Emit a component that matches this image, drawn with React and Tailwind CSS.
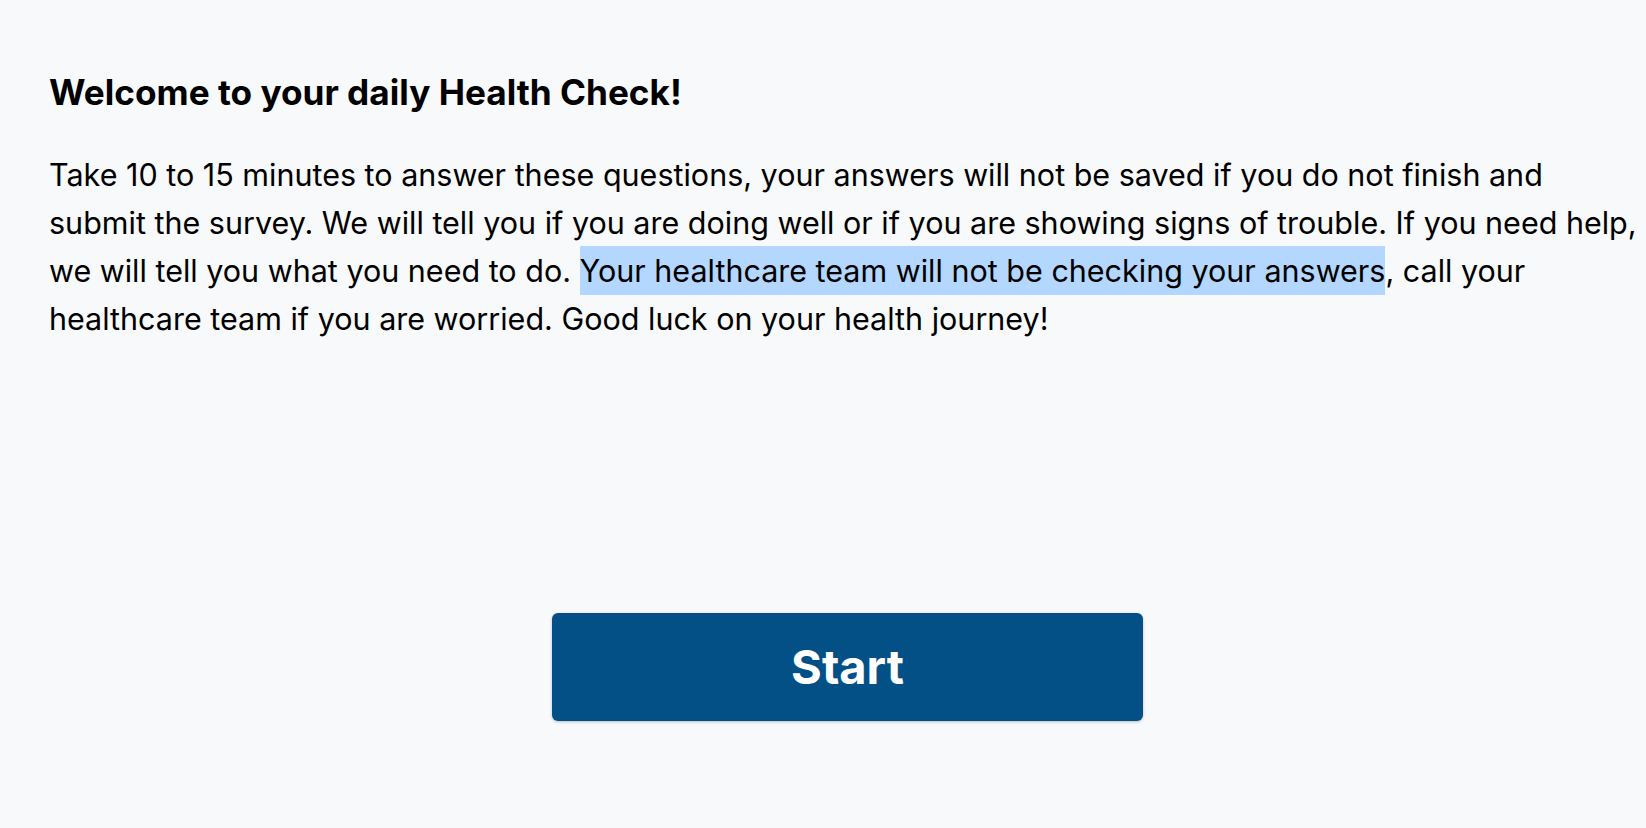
import React from "react";

export default function App() {
  return (
    <div className="min-h-[828px] w-full overflow-hidden bg-[#f8f9fb] font-['Inter',sans-serif] text-black">
      <div className="pl-[49px] pt-[70px]">
        <h1 className="text-[35.2px] font-bold leading-[44px]">
          Welcome to your daily Health Check!
        </h1>
        <p className="mt-[37px] whitespace-nowrap text-[30.5px] leading-[48px]">
          Take 10 to 15 minutes to answer these questions, your answers will not be saved if you do not finish and
          <br />
          submit the survey. We will tell you if you are doing well or if you are showing signs of trouble. If you need help,
          <br />
          we will tell you what you need to do.{" "}
          <span className="bg-[#b3d7fe] py-[6px]">Your healthcare team will not be checking your answers</span>, call your
          <br />
          healthcare team if you are worried. Good luck on your health journey!
        </p>
        <div className="mt-[270px] flex justify-center">
          <button className="w-[591px] h-[108px] rounded-[6px] bg-[#035087] shadow-[0_1px_3px_rgba(0,0,0,0.25)] text-white text-[47px] font-bold">
            Start
          </button>
        </div>
      </div>
    </div>
  );
}
